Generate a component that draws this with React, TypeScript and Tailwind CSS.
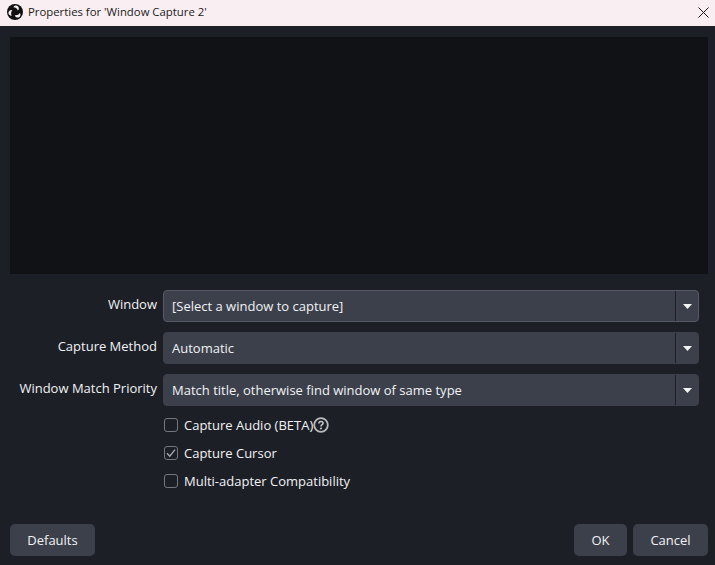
import React from "react";

function Combo({ text, focused }: { text: string; focused?: boolean }) {
  return (
    <div className={`flex h-8 rounded-[4px] border bg-[#3c404b] ${focused ? "border-[#565a66]" : "border-[#3c404b]"}`}>
      <div className="flex-1 pl-2 leading-[30px] text-[13px] text-[#f0f2f5]">{text}</div>
      <div className="flex w-[23px] items-center justify-center border-l border-[#1d1f26]">
        <svg width="9" height="5" viewBox="0 0 9 5"><path d="M0 0H9L4.5 5Z" fill="#f4f4f5" /></svg>
      </div>
    </div>
  );
}

function Row({ label, text, focused }: { label: string; text: string; focused?: boolean }) {
  return (
    <div className="flex items-start gap-[6px]">
      <div className="w-[147px] pt-[4px] text-right text-[13px] leading-[20px] text-[#f0f2f5] whitespace-nowrap">{label}</div>
      <div className="flex-1"><Combo text={text} focused={focused} /></div>
    </div>
  );
}

function Check({ label, checked, help }: { label: string; checked?: boolean; help?: boolean }) {
  return (
    <div className="flex h-5 items-center">
      <div className="flex h-[14px] w-[14px] items-center justify-center rounded-[3px] border border-[#74777f]">
        {checked && (
          <svg width="10" height="10" viewBox="0 0 10 10" fill="none"><path d="M1 5.2 3.8 8.2 9 1.6" stroke="#a9abb0" strokeWidth="1.3" /></svg>
        )}
      </div>
      <span className="ml-[6px] text-[13px] leading-5 text-[#f0f2f5]">{label}</span>
      {help && (
        <svg width="16" height="16" viewBox="0 0 16 16" fill="none">
          <circle cx="8" cy="8" r="6.8" stroke="#b9babd" strokeWidth="1.8" />
          <path d="M5.9 6.4C5.9 5.2 6.8 4.5 8 4.5S10.1 5.2 10.1 6.3C10.1 7.7 8 7.7 8 9.4" stroke="#c9cacd" strokeWidth="1.5" />
          <circle cx="8" cy="11.4" r="1" fill="#c9cacd" />
        </svg>
      )}
    </div>
  );
}

function Btn({ text, w }: { text: string; w: string }) {
  return (
    <div className={`${w} h-8 rounded-[5px] bg-[#3c404b] text-center text-[13px] leading-8 text-[#f0f2f5]`}>{text}</div>
  );
}

const blade = "M10.6 1.9A3 3 0 0 1 10.9 6.6A5 5 0 0 0 6.3 3.3A3 3 0 0 1 10.6 1.9Z";

export default function App() {
  return (
    <div className="flex h-[565px] w-[715px] flex-col overflow-hidden bg-[#1d1f26] font-['Open_Sans',sans-serif]">
      <div className="flex h-[26px] shrink-0 items-center bg-[#f9eff2] pl-[7px] pr-[6px]">
        <svg className="mb-[2px]" width="16" height="16" viewBox="0 0 16 16">
          <circle cx="8" cy="8" r="8" fill="#111" />
          <path d={blade} fill="#f9eff2" />
          <path d={blade} fill="#f9eff2" transform="rotate(120 8 8)" />
          <path d={blade} fill="#f9eff2" transform="rotate(240 8 8)" />
        </svg>
        <span className="mb-[2px] ml-[5px] text-[11.35px] text-[#1a1a1a]">Properties for 'Window Capture 2'</span>
        <svg className="mb-[2px] ml-auto" width="11" height="11" viewBox="0 0 11 11" fill="none"><path d="M.5.5 10.5 10.5M10.5.5.5 10.5" stroke="#1a1a1a" /></svg>
      </div>
      <div className="ml-[10px] mr-[7px] mt-[11px] h-[237px] shrink-0 bg-[#111216]" />
      <div className="ml-[10px] mr-4 mt-4 flex flex-col gap-[10px]">
        <Row label="Window" text="[Select a window to capture]" focused />
        <Row label="Capture Method" text="Automatic" />
        <Row label="Window Match Priority" text="Match title, otherwise find window of same type" />
      </div>
      <div className="ml-[164px] mt-[9px] flex flex-col gap-2">
        <Check label="Capture Audio (BETA)" help />
        <Check label="Capture Cursor" checked />
        <Check label="Multi-adapter Compatibility" />
      </div>
      <div className="ml-[10px] mr-[7px] mt-[33px] flex gap-[6px]">
        <Btn text="Defaults" w="w-[85px]" />
        <div className="flex-1" />
        <Btn text="OK" w="w-[53px]" />
        <Btn text="Cancel" w="w-[75px]" />
      </div>
    </div>
  );
}
